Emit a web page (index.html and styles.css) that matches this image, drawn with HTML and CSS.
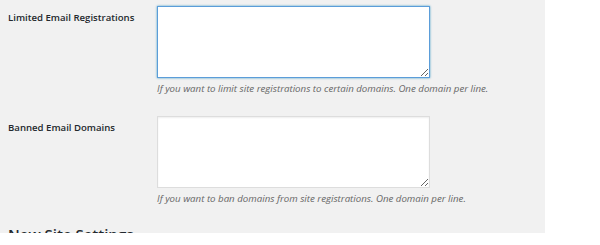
FILE: index.html
```html
<!DOCTYPE html>
<html lang="en">
<head>
    <meta charset="UTF-8">
    <title>Registration Settings</title>
    <link rel="stylesheet" href="styles.css">
</head>
<body>
    <div class="wrap">
        <div class="form-row first">
            <label class="row-label" for="limited">Limited Email Registrations</label>
            <div class="row-field">
                <textarea id="limited" class="focused"></textarea>
                <p class="hint">If you want to limit site registrations to certain domains. One domain per line.</p>
            </div>
        </div>
        <div class="form-row">
            <label class="row-label" for="banned">Banned Email Domains</label>
            <div class="row-field">
                <textarea id="banned"></textarea>
                <p class="hint">If you want to ban domains from site registrations. One domain per line.</p>
            </div>
        </div>
        <h2>New Site Settings</h2>
    </div>
</body>
</html>
```

FILE: styles.css
```css
* {
    box-sizing: border-box;
    margin: 0;
    padding: 0;
}
body {
    background: #fff;
    font-family: 'Open Sans', sans-serif;
    color: #444;
}
.wrap {
    width: 545px;
    height: 233px;
    background: #f1f1f1;
    overflow: hidden;
    padding: 6px 0 0 8px;
}
.form-row {
    display: flex;
}
.form-row + .form-row {
    margin-top: 21px;
}
.row-label {
    width: 149px;
    flex-shrink: 0;
    font-size: 9.6px;
    font-weight: 600;
    color: #23282d;
    padding-top: 5px;
}
.row-field {
    display: flex;
    flex-direction: column;
}
textarea {
    display: block;
    width: 273px;
    height: 72px;
    background: #fff;
    border: 1px solid #ddd;
    box-shadow: inset 0 1px 2px rgba(0, 0, 0, 0.07);
    resize: vertical;
    outline: none;
}
textarea.focused {
    border-color: #5b9dd9;
    box-shadow: 0 0 2px rgba(30, 140, 190, 0.8);
}
.hint {
    font-size: 9.7px;
    font-style: italic;
    color: #666;
    margin-top: 4px;
}
h2 {
    font-size: 15px;
    font-weight: 600;
    color: #23282d;
    margin-top: 19px;
}
```
